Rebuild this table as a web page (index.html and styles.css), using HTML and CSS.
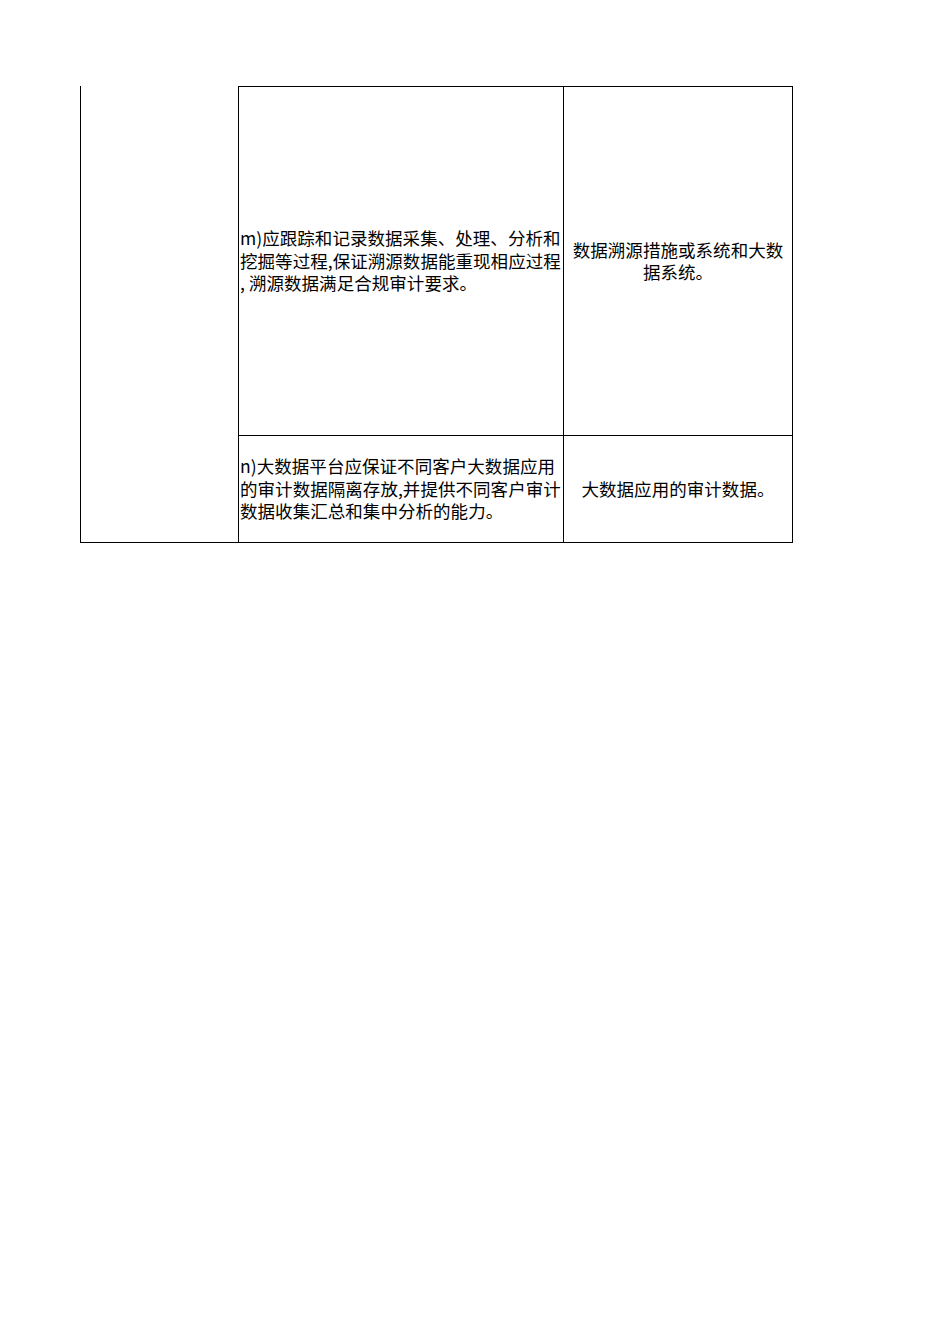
FILE: index.html
```html
<!DOCTYPE html>
<html lang="zh-CN">
<head>
<meta charset="utf-8">
<title>表格</title>
<link rel="stylesheet" href="styles.css">
</head>
<body>
<div class="page">
  <div class="grid">
    <div class="cell c1"></div>
    <div class="cell c2 r1 top">
      <p class="txt left">m)应跟踪和记录数据采集、处理、分析和<br>挖掘等过程,保证溯源数据能重现相应过程<br>, 溯源数据满足合规审计要求。</p>
    </div>
    <div class="cell c3 r1 top">
      <p class="txt center">数据溯源措施或系统和大数<br>据系统。</p>
    </div>
    <div class="cell c2 r2">
      <p class="txt left">n)大数据平台应保证不同客户大数据应用<br>的审计数据隔离存放,并提供不同客户审计<br>数据收集汇总和集中分析的能力。</p>
    </div>
    <div class="cell c3 r2">
      <p class="txt center">大数据应用的审计数据。</p>
    </div>
  </div>
</div>
</body>
</html>
```

FILE: styles.css
```css
html, body {
  margin: 0;
  padding: 0;
  background: #ffffff;
}

body {
  font-family: "Noto Sans CJK SC", "Noto Sans", "Liberation Sans", sans-serif;
  color: #000000;
}

.page {
  width: 950px;
  height: 1344px;
  box-sizing: border-box;
  padding: 86px 0 0 80px;
}

.grid {
  display: grid;
  grid-template-columns: 158px 325px 229px;
  grid-template-rows: 350px 107px;
  width: max-content;
  border-left: 1px solid #000;
}

.cell {
  box-sizing: border-box;
  border-right: 1px solid #000;
  border-bottom: 1px solid #000;
  display: flex;
  align-items: center;
}

.c1 {
  grid-column: 1;
  grid-row: 1 / span 2;
}

.c2 {
  grid-column: 2;
  padding-left: 1px;
}

.c3 {
  grid-column: 3;
  justify-content: center;
}

.r1 { grid-row: 1; }
.r2 { grid-row: 2; }

.top {
  border-top: 1px solid #000;
}

.txt {
  margin: 0;
  font-size: 17.5px;
  line-height: 22.5px;
  white-space: nowrap;
  letter-spacing: 0.05px;
}

.left { text-align: left; }
.center { text-align: center; }
```
